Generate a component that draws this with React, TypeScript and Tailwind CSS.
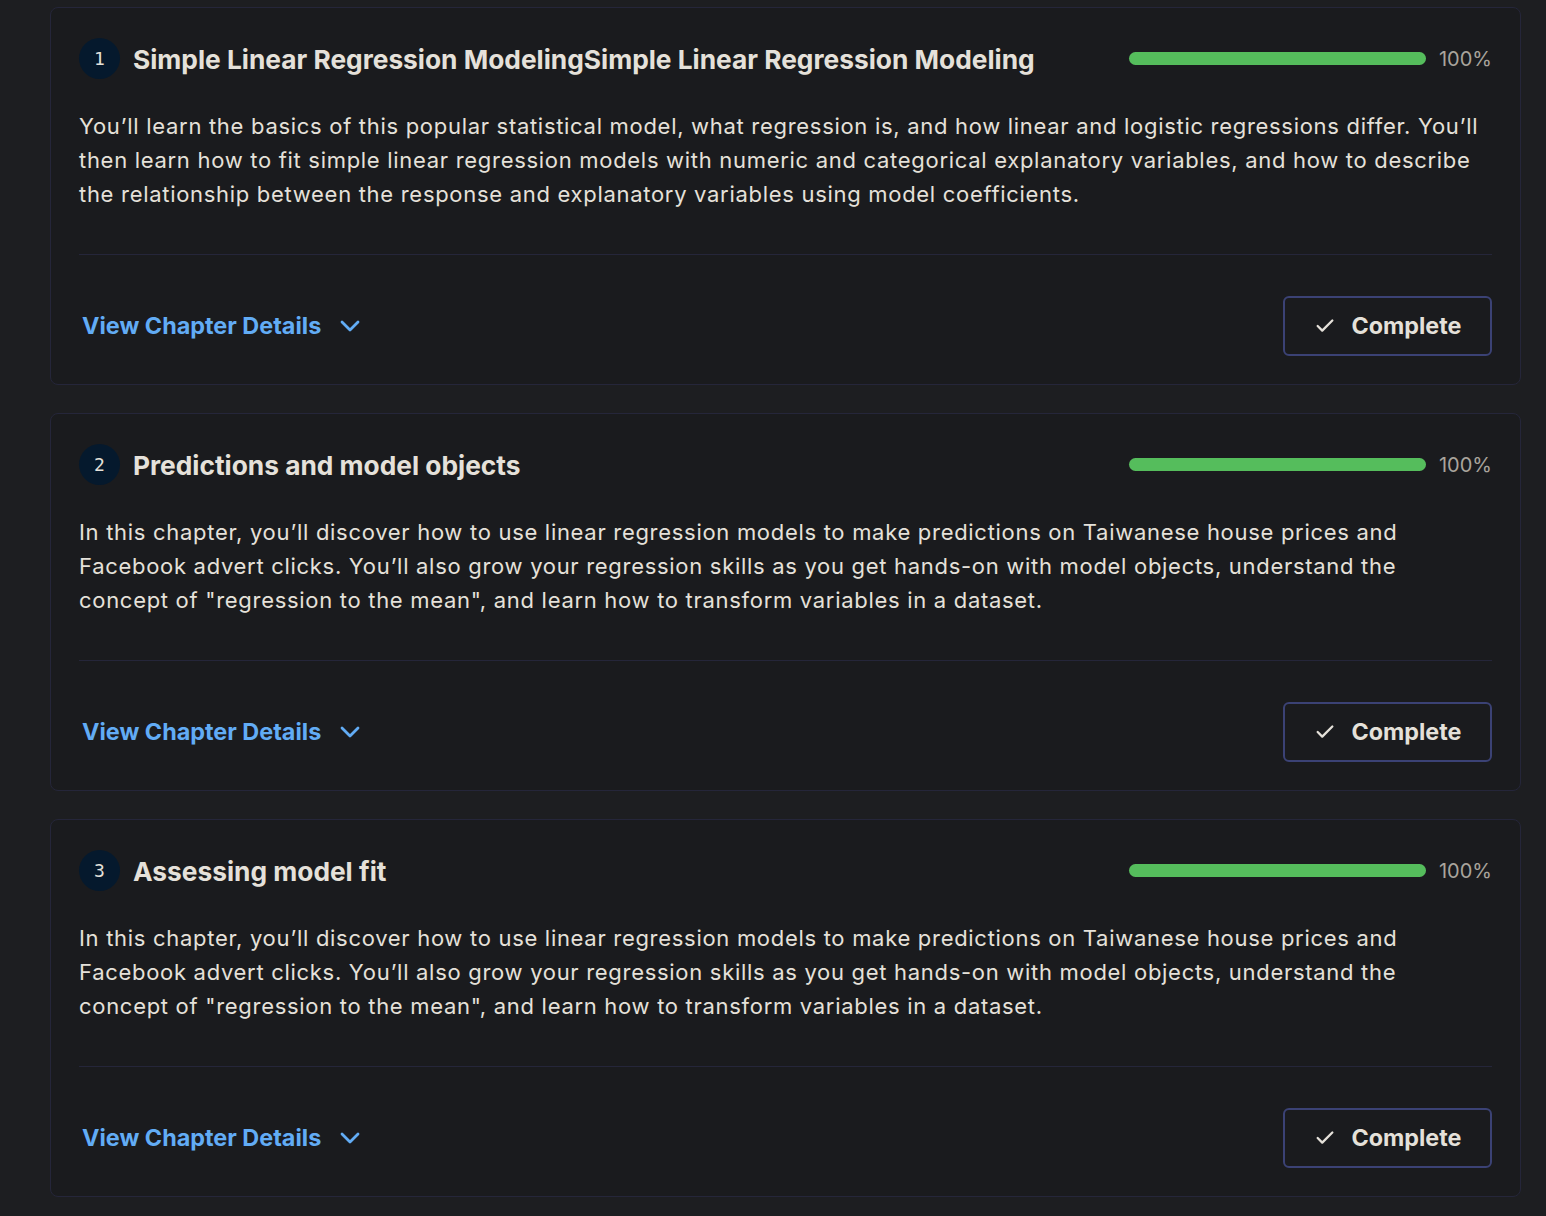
import { Check } from "lucide-react";

type Chapter = {
  num: number;
  title: string;
  description: string;
  progress: number;
};

const chapters: Chapter[] = [
  {
    num: 1,
    title: "Simple Linear Regression ModelingSimple Linear Regression Modeling",
    description:
      "You’ll learn the basics of this popular statistical model, what regression is, and how linear and logistic regressions differ. You’ll then learn how to fit simple linear regression models with numeric and categorical explanatory variables, and how to describe the relationship between the response and explanatory variables using model coefficients.",
    progress: 100,
  },
  {
    num: 2,
    title: "Predictions and model objects",
    description:
      "In this chapter, you’ll discover how to use linear regression models to make predictions on Taiwanese house prices and Facebook advert clicks. You’ll also grow your regression skills as you get hands-on with model objects, understand the concept of \"regression to the mean\", and learn how to transform variables in a dataset.",
    progress: 100,
  },
  {
    num: 3,
    title: "Assessing model fit",
    description:
      "In this chapter, you’ll discover how to use linear regression models to make predictions on Taiwanese house prices and Facebook advert clicks. You’ll also grow your regression skills as you get hands-on with model objects, understand the concept of \"regression to the mean\", and learn how to transform variables in a dataset.",
    progress: 100,
  },
];

const ChevronIcon = () => (
  <svg width="20" height="12" viewBox="0 0 20 12" fill="none" className="shrink-0">
    <path d="M2 2l8 8 8-8" stroke="currentColor" strokeWidth="2.8" strokeLinecap="round" strokeLinejoin="round" />
  </svg>
);

const ChapterCard = ({ chapter }: { chapter: Chapter }) => {
  return (
    <div className="flex flex-col rounded-lg border border-[#25263a] bg-[#1a1b1e] px-[28px] pt-[30px] pb-[28px]">
      <div className="flex items-center">
        <span className="flex h-[41px] w-[41px] shrink-0 items-center justify-center rounded-full bg-[#05192d] font-['DejaVu_Sans_Mono',monospace] text-[18px] text-[#e5e1da]">
          {chapter.num}
        </span>
        <h3 className="ml-[13px] flex-1 pt-[3px] text-[26.3px] font-bold leading-none text-[#e5e1da]">
          {chapter.title}
        </h3>
        <div className="flex items-center gap-x-[13px]">
          <div className="h-[13px] w-[297px] rounded-full bg-[#2c2d31]">
            <div className="h-full rounded-full bg-[#55bd5c]" style={{ width: `${chapter.progress}%` }} />
          </div>
          <span className="text-[20px] leading-none text-[#a9a49c]">{chapter.progress}%</span>
        </div>
      </div>
      <p className="mt-[30px] text-[22px] leading-[34px] tracking-[0.7px] text-[#e5e1da]">{chapter.description}</p>
      <div className="mt-[43px] h-px bg-[#25263a]" />
      <div className="mt-[41px] flex items-center justify-between">
        <button className="flex items-center gap-x-[19px] pl-[3px] text-[23.4px] font-bold text-[#62acf5]">
          View Chapter Details
          <ChevronIcon />
        </button>
        <button className="flex h-[60px] w-[209px] items-center justify-center gap-x-[16px] rounded-md border-2 border-[#3b4275] text-[23.3px] font-bold text-[#e5e1da]">
          <Check className="h-[22px] w-[22px]" strokeWidth={2.5} />
          Complete
        </button>
      </div>
    </div>
  );
};

export default function App() {
  return (
    <div className="min-h-screen bg-[#1d1e21] font-['Inter',sans-serif]">
      <div className="ml-[50px] flex w-[1471px] flex-col gap-y-[28px] pt-[7px] pb-[16px]">
        {chapters.map((chapter) => (
          <ChapterCard key={chapter.num} chapter={chapter} />
        ))}
      </div>
    </div>
  );
}
